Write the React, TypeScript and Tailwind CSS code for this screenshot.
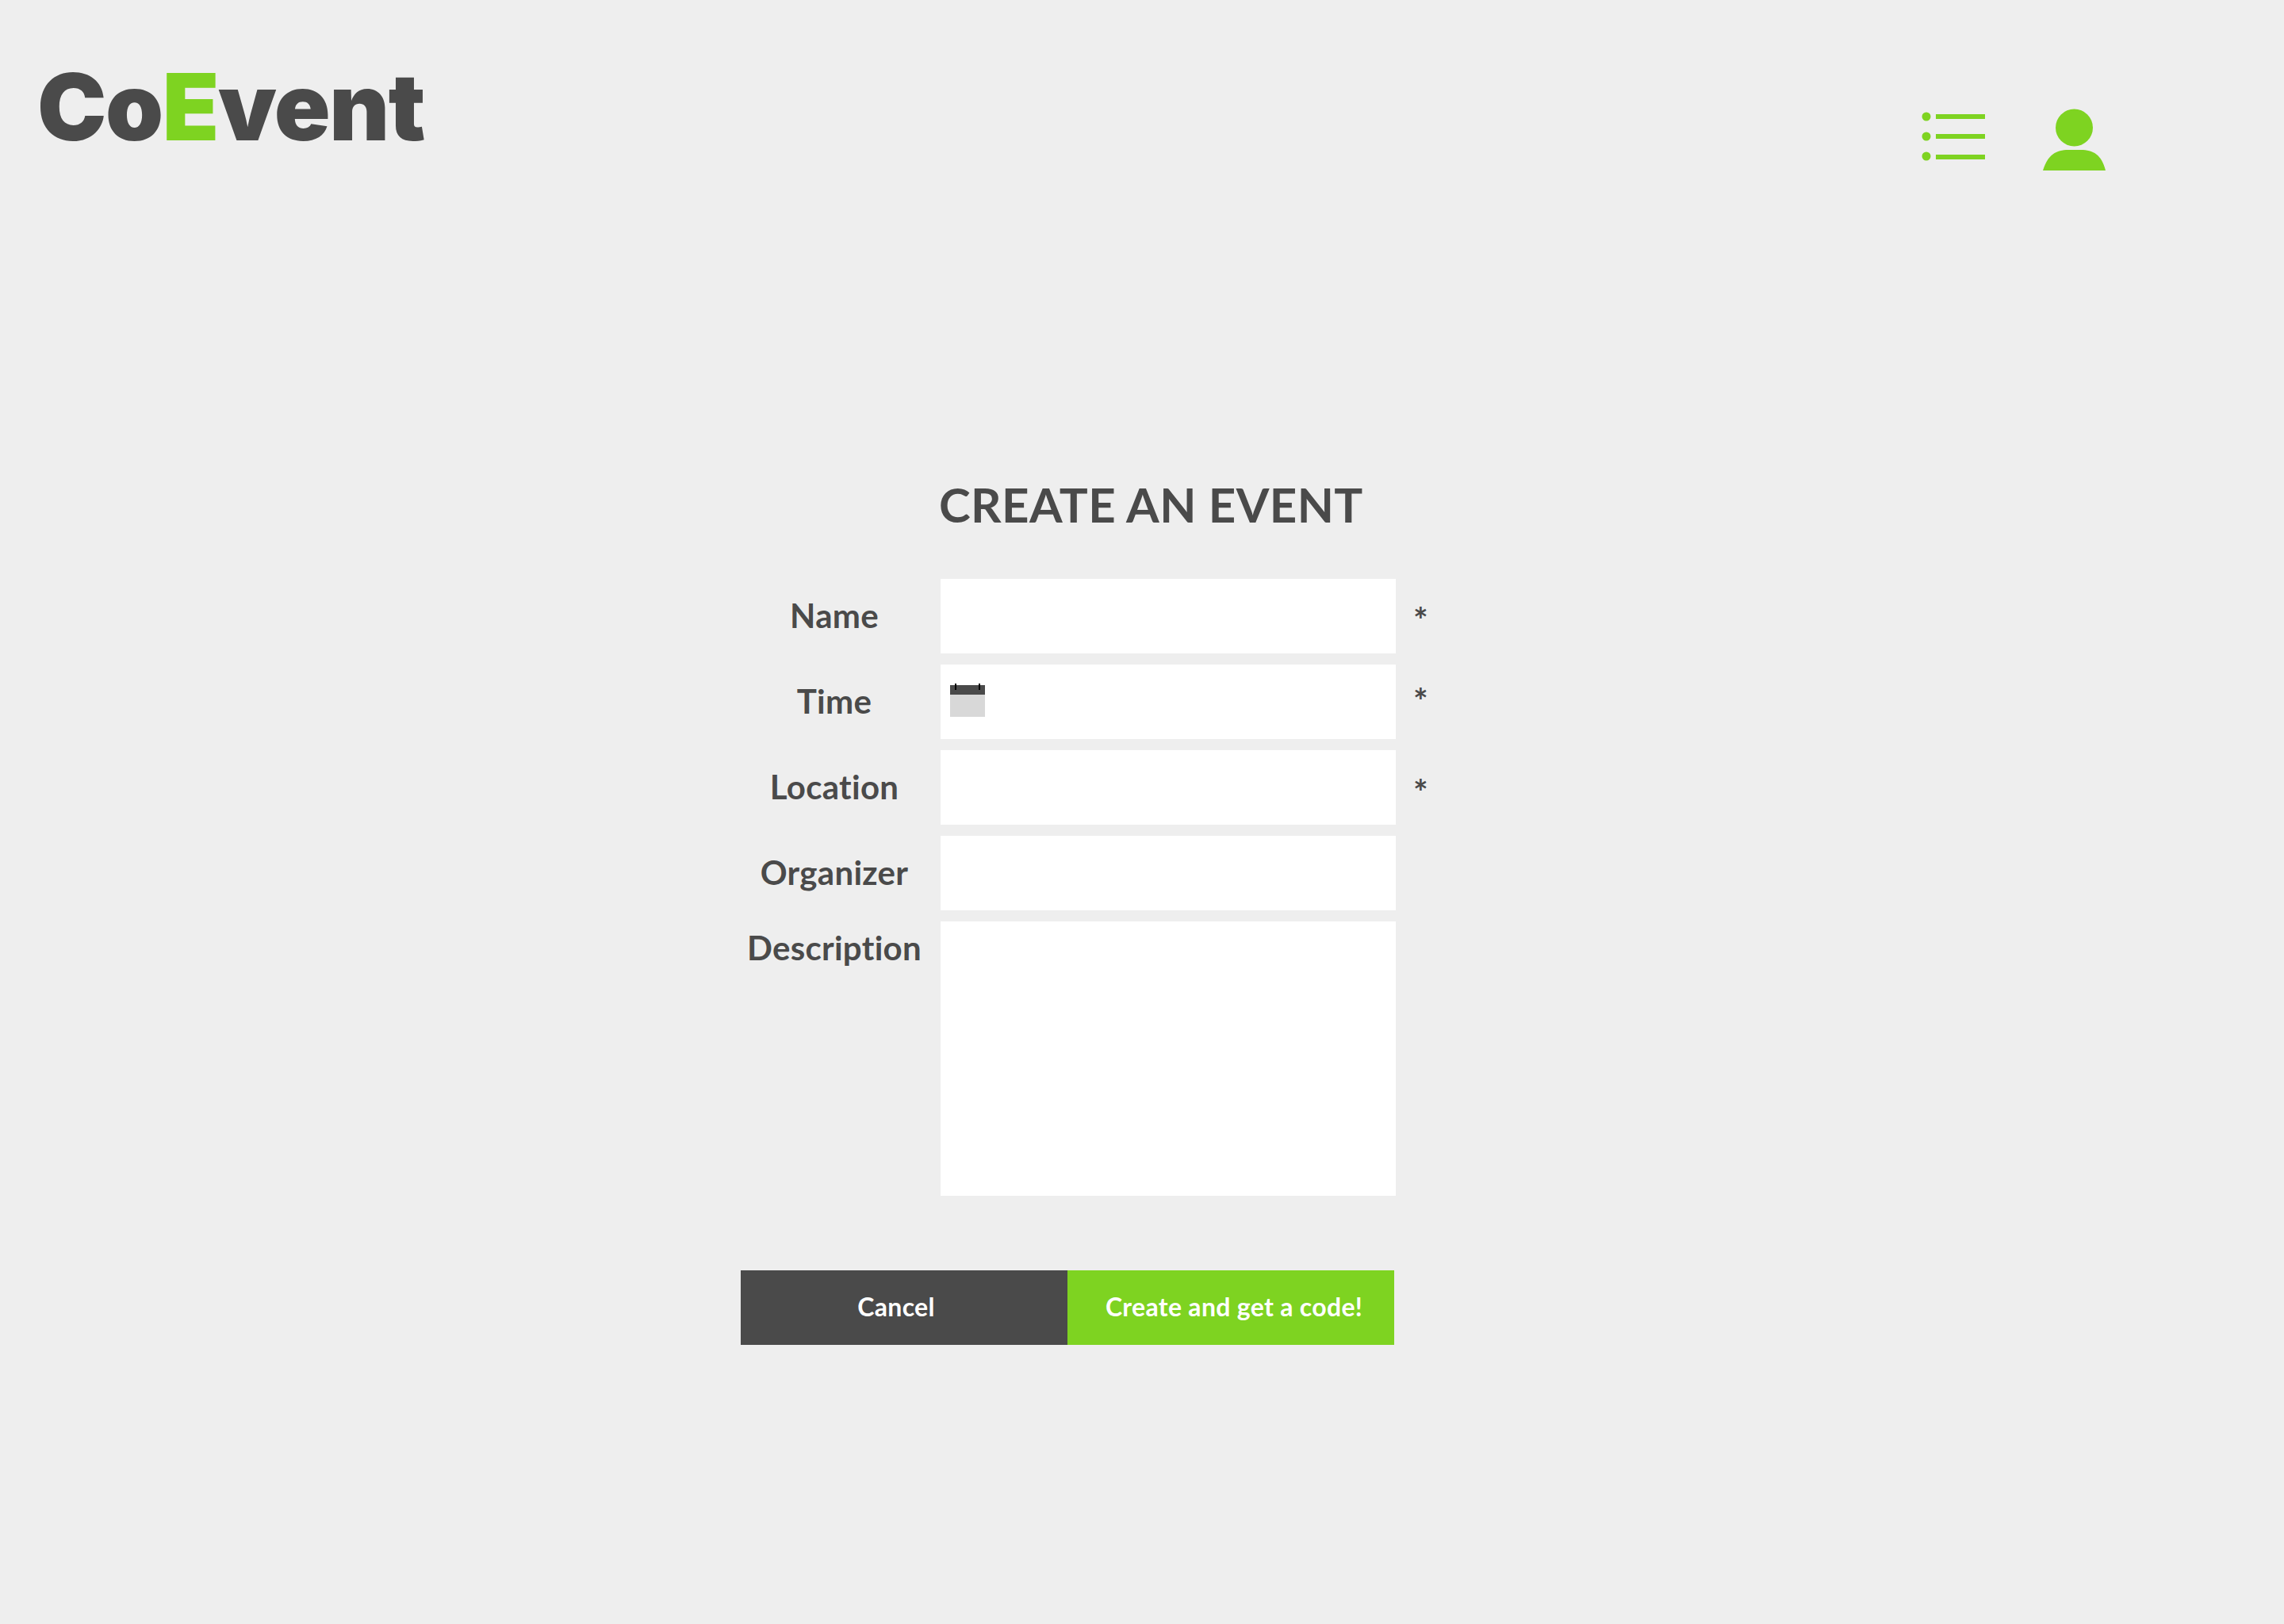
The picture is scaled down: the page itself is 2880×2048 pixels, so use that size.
const fields = [
  { label: 'Name', required: true, star: 'translate-y-[4px]' },
  { label: 'Time', required: true, star: '-translate-y-[2px]', calendar: true },
  { label: 'Location', required: true, star: 'translate-y-[5px]' },
  { label: 'Organizer', required: false, star: '' },
];

function ListIcon() {
  return (
    <svg className="mt-[4px]" width="80" height="62" viewBox="0 0 80 62" fill="#7ed321">
      <circle cx="6" cy="6" r="5.5" />
      <circle cx="6" cy="31" r="5.5" />
      <circle cx="6" cy="56" r="5.5" />
      <rect x="18" y="3" width="62" height="6" />
      <rect x="18" y="28" width="62" height="6" />
      <rect x="18" y="54" width="62" height="6" />
    </svg>
  );
}

function UserIcon() {
  return (
    <svg width="80" height="78" viewBox="0 0 80 78" fill="#7ed321">
      <circle cx="39.5" cy="24" r="23.5" />
      <path d="M0 78 C6 58 17 52 32 52 L48 52 C63 52 74 58 79 78 Z" />
    </svg>
  );
}

function CalendarIcon() {
  return (
    <svg className="absolute left-[12px] top-[24px]" width="44" height="42" viewBox="0 0 44 42">
      <rect x="0" y="2" width="44" height="12" fill="#4a4a4a" />
      <rect x="0" y="14" width="44" height="28" fill="#d8d8d8" />
      <rect x="6" y="0" width="2" height="8" fill="#000" />
      <rect x="36" y="0" width="2" height="8" fill="#000" />
    </svg>
  );
}

export default function App() {
  return (
    <div className="min-h-[2048px] bg-[#eeeeee] text-[#4a4a4a] font-['Lato','Liberation_Sans',sans-serif]">
      <header className="flex items-start justify-between pl-[47px] pr-[224px] pt-[65px]">
        <div className="font-['Inter',sans-serif] text-[117px] leading-[140px] font-black tracking-[-1.4px]">
          Co<span className="text-[#7ed321]">E</span>vent
        </div>
        <div className="flex items-start gap-[73px] pt-[72px]">
          <ListIcon />
          <UserIcon />
        </div>
      </header>

      <main className="ml-[934px] w-[870px] pt-[385px]">
        <h1 className="pl-[250px] text-[60px] leading-[72px] font-bold tracking-[0.4px]">CREATE AN EVENT</h1>

        <form className="mt-[58px] flex flex-col gap-[14px]">
          {fields.map(f => (
            <div key={f.label} className="flex items-center">
              <label className="w-[236px] pb-[2px] text-center text-[42px] font-bold tracking-[0.3px]">{f.label}</label>
              <div className="relative ml-[16px] h-[94px] w-[574px]">
                {f.calendar && <CalendarIcon />}
                <input className="h-full w-full bg-white outline-none" />
              </div>
              {f.required && <span className={`ml-[22px] text-[44px] leading-[44px] font-bold ${f.star}`}>*</span>}
            </div>
          ))}
          <div className="flex items-start">
            <label className="w-[236px] pt-[2px] text-center text-[42px] font-bold tracking-[0.3px]">Description</label>
            <textarea className="ml-[16px] h-[346px] w-[574px] resize-none bg-white outline-none" />
          </div>
        </form>

        <div className="mt-[94px] flex h-[94px] w-[824px] text-[32px] font-bold tracking-[0.3px] text-white">
          <button className="w-[412px] bg-[#4a4a4a] pr-[20px] pb-[2px]">Cancel</button>
          <button className="w-[412px] bg-[#7ed321] pl-[8px] pb-[2px]">Create and get a code!</button>
        </div>
      </main>
    </div>
  );
}
